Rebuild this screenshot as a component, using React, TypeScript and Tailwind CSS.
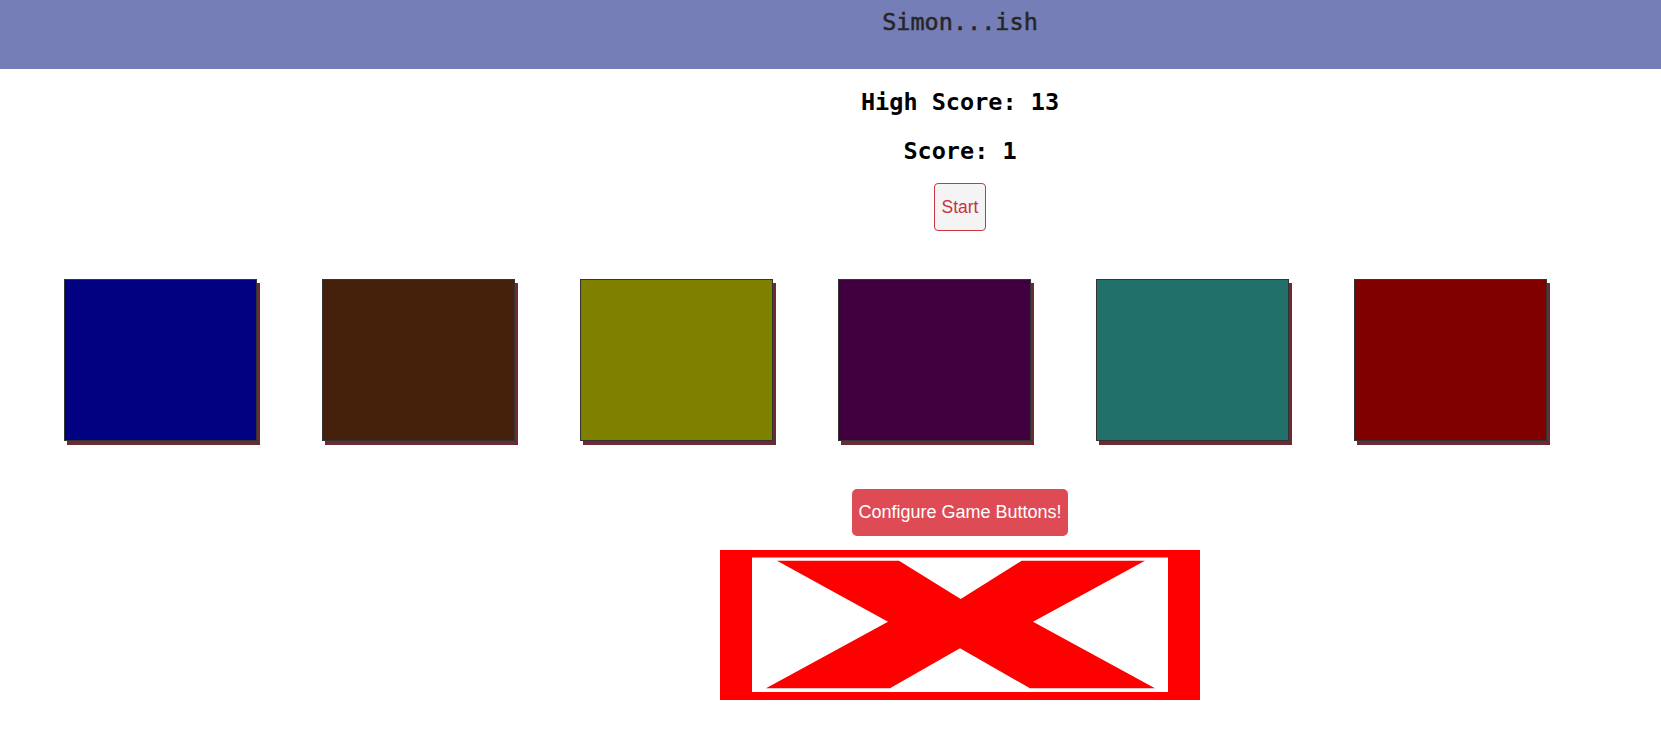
import React from "react";

const squares = ["#000080", "#45210c", "#808000", "#400040", "#21706a", "#800000"];

export default function App() {
  return (
    <div className="w-full h-screen overflow-hidden bg-white">
      <div className="w-[1920px] flex flex-col">
        <header className="h-[69px] bg-[#757eb6] flex justify-center pt-[8px]">
          <h1 className="text-[23.5px] leading-[28px] font-normal text-[#262626] [-webkit-text-stroke:0.5px_#262626] font-['DejaVu_Sans_Mono',monospace]">
            Simon...ish
          </h1>
        </header>
        <main className="flex flex-col items-center">
          <h2 className="mt-[19px] text-[23.5px] leading-[28px] font-bold text-black font-['DejaVu_Sans_Mono',monospace]">
            High Score: 13
          </h2>
          <h2 className="mt-[21px] text-[23.5px] leading-[28px] font-bold text-black font-['DejaVu_Sans_Mono',monospace]">
            Score: 1
          </h2>
          <button className="mt-[18px] w-[52px] h-[48px] flex items-center justify-center rounded-[4px] border border-[#c93744] bg-[#f4f4f4] text-[#c8323f] text-[17.5px] font-['Liberation_Sans',Arial,sans-serif]">
            Start
          </button>
          <div className="self-stretch mt-[48px] flex pl-[64px] gap-[65px]">
            {squares.map((c) => (
              <div
                key={c}
                className="w-[193px] h-[162px] border border-[#333333] shadow-[3px_4px_0_0_#6c2a32]"
                style={{ backgroundColor: c }}
              />
            ))}
          </div>
          <button className="mt-[48px] w-[216px] h-[47px] flex items-center justify-center rounded-[5px] bg-[#de4b55] text-white text-[18px] font-['Liberation_Sans',Arial,sans-serif]">
            Configure Game Buttons!
          </button>
          <div className="mt-[14px] w-[480px] h-[150px]">
            <svg width="480" height="150" viewBox="0 0 480 150">
              <rect x="0" y="0" width="480" height="150" fill="#ff0000" />
              <rect x="32" y="7.5" width="416" height="134.5" fill="#ffffff" />
              <polygon
                fill="#ff0000"
                points="57,10.7 179,10.7 240.7,49 301.7,10.7 425,10.7 313,71.7 435,138.3 310,138.3 240,98.3 170,138.3 46,138.3 168,71.7"
              />
            </svg>
          </div>
        </main>
      </div>
    </div>
  );
}
